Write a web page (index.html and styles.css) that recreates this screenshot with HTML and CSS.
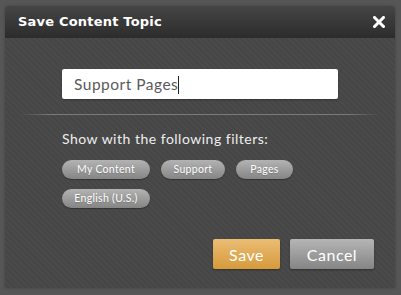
FILE: index.html
```html
<!DOCTYPE html>
<html lang="en">
<head>
    <meta charset="UTF-8">
    <title>Save Content Topic</title>
    <link rel="stylesheet" href="styles.css">
</head>
<body>
    <div class="dialog">
        <div class="dialog-header">
            <span class="dialog-title">Save Content Topic</span>
            <svg class="close-btn" width="12" height="12" viewBox="0 0 12 12">
                <path d="M1.5 1.5 L10.5 10.5 M10.5 1.5 L1.5 10.5" stroke="white" stroke-width="3" stroke-linecap="square"/>
            </svg>
        </div>

        <div class="dialog-body">
            <div class="field">
                <div class="topic-input">Support Pages<span class="caret"></span></div>
            </div>

            <div class="divider"></div>

            <div class="filters">
                <div class="filters-label">Show with the following filters:</div>
                <div class="pills">
                    <span class="pill">My Content</span>
                    <span class="pill pill-mid">Support</span>
                    <span class="pill pill-short">Pages</span>
                    <span class="pill">English (U.S.)</span>
                </div>
            </div>

            <div class="actions">
                <button class="button button-save">Save</button>
                <button class="button button-cancel">Cancel</button>
            </div>
        </div>
    </div>
</body>
</html>
```

FILE: styles.css
```css
body {
    margin: 0;
    padding: 6px 6px 7px 5px;
    background: #565656;
    font-family: 'Lato', 'DejaVu Sans', sans-serif;
    color: white;
    height: 295px;
    box-sizing: border-box;
    overflow: hidden;
}

.dialog {
    height: 282px;
    display: flex;
    flex-direction: column;
    border-radius: 4px 4px 0 0;
    overflow: hidden;
    box-shadow: 0 0 3px rgba(0, 0, 0, 0.25);
}

.dialog-header {
    height: 32px;
    flex-shrink: 0;
    display: flex;
    align-items: center;
    justify-content: space-between;
    padding: 0 10px 0 13px;
    background: linear-gradient(#454545, #2c2c2c);
}

.dialog-title {
    font-family: 'DejaVu Sans', sans-serif;
    font-weight: bold;
    font-size: 13px;
    letter-spacing: 0.2px;
    margin-top: -1px;
}

.close-btn {
    margin-top: -1px;
}

.dialog-body {
    flex: 1;
    display: flex;
    flex-direction: column;
    background: repeating-linear-gradient(45deg, #4a4a4a 0, #4a4a4a 2px, #464646 2px, #464646 4px);
}

.field {
    padding: 31px 57px 0;
}

.topic-input {
    height: 30px;
    background: white;
    border-radius: 2px;
    color: #5a5a5a;
    font-size: 15.5px;
    letter-spacing: 0.5px;
    line-height: 31px;
    padding-left: 12px;
    box-shadow: 0 1px 2px rgba(0, 0, 0, 0.3);
}

.caret {
    display: inline-block;
    width: 1px;
    height: 18px;
    background: #222;
    vertical-align: -4px;
}

.divider {
    height: 1px;
    margin: 15px 0 0;
    background: linear-gradient(to right, rgba(120, 120, 120, 0) 4%, #7a7a7a 12%, #7a7a7a 88%, rgba(120, 120, 120, 0) 96%);
}

.filters {
    padding: 15px 57px 0;
}

.filters-label {
    font-size: 14px;
    letter-spacing: 0.5px;
    color: #eee;
}

.pills {
    display: flex;
    flex-wrap: wrap;
    gap: 10px 11px;
    margin-top: 13px;
    width: 245px;
}

.pill {
    height: 19px;
    line-height: 19px;
    width: 88px;
    text-align: center;
    font-size: 10.5px;
    letter-spacing: 0.3px;
    color: white;
    border-radius: 10px;
    background: linear-gradient(#b3b3b3, #858585);
    box-shadow: 0 1px 1px rgba(0, 0, 0, 0.3);
    text-shadow: 0 1px 1px rgba(0, 0, 0, 0.2);
}

.pill-mid {
    width: 64px;
}

.pill-short {
    width: 57px;
}

.actions {
    display: flex;
    justify-content: flex-end;
    gap: 10px;
    padding: 31px 21px 0;
}

.button {
    height: 30px;
    border: none;
    border-radius: 2px;
    color: white;
    font-family: 'Lato', 'DejaVu Sans', sans-serif;
    font-size: 16px;
    letter-spacing: 0.5px;
    padding: 0;
    box-shadow: 0 1px 2px rgba(0, 0, 0, 0.35);
    cursor: pointer;
}

.button-save {
    width: 67px;
    background: linear-gradient(#ebbd75, #d69a3a);
}

.button-cancel {
    width: 84px;
    background: linear-gradient(#b5b5b5, #858585);
}
```
